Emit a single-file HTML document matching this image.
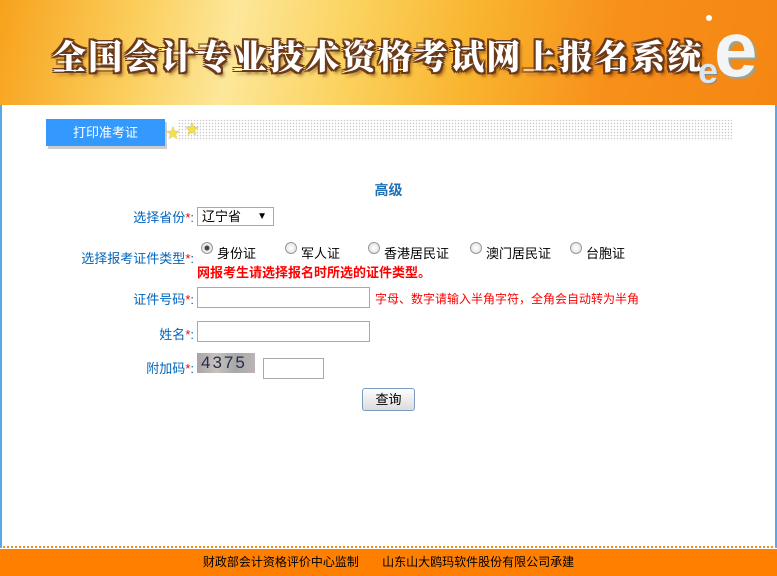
<!DOCTYPE html>
<html><head><meta charset="utf-8">
<style>
*{margin:0;padding:0;box-sizing:border-box}
body{width:777px;height:576px;overflow:hidden;background:#fff;font-family:"Liberation Sans","Noto Sans CJK SC","WenQuanYi Zen Hei",sans-serif;font-size:13px;position:relative}
.banner{position:absolute;left:0;top:0;width:777px;height:105px;background:linear-gradient(100deg,#f7a21c 0%,#fbcf5e 18%,#fde79a 30%,#fbd25e 45%,#f9b530 60%,#f7901a 78%,#f68612 100%);overflow:hidden}
.title{position:absolute;left:52px;top:30px;font-family:"Noto Serif CJK SC","Noto Sans CJK SC",serif;font-weight:900;font-size:34px;color:#fff;letter-spacing:2.2px;
text-shadow:-2px -2px 0 #6b3a1a,2px -2px 0 #6b3a1a,-2px 2px 0 #6b3a1a,2px 2px 0 #6b3a1a,0 2px 0 #6b3a1a,0 -2px 0 #6b3a1a,2px 0 0 #6b3a1a,-2px 0 0 #6b3a1a,3px 4px 3px rgba(90,40,0,.6)}
.bige{position:absolute;left:714px;top:10px;font-size:78px;font-weight:bold;color:#f2f4f6;line-height:1;text-shadow:2px 2px 2px #8aa}
.sme{position:absolute;left:698px;top:50px;font-size:36px;font-weight:bold;color:#dce6ec;text-shadow:1px 1px 1px #789}
.main{position:absolute;left:0;top:105px;width:777px;height:443px;border-left:2px solid #5aa6e8;border-right:2px solid #5aa6e8;border-bottom:2px dotted #f7901a}
.tab{position:absolute;left:46px;top:119px;width:119px;height:27px;background:#3399ff;color:#fff;text-align:center;line-height:27px;font-size:13px;box-shadow:2px 3px 0 #ccc}
.dots{position:absolute;left:178px;top:119px;width:554px;height:22px;background-image:radial-gradient(#c8c8c8 0.6px,transparent 0.9px);background-size:3px 3px}
.star{position:absolute;color:#f3e04a;font-size:14px;text-shadow:0 0 1px #a08000}
.lbl{position:absolute;color:#0066bb;text-align:right;width:200px;font-size:13px}
.lbl b{color:#e00;font-weight:normal}
.inp{position:absolute;border:1px solid #a9a9a9;background:#fff}
.radio{position:absolute;width:12px;height:12px;border-radius:50%;border:1px solid #999;background:radial-gradient(#fff,#ddd)}
.rt{position:absolute;font-size:13px;color:#000}
.footer{position:absolute;left:0;top:549px;width:777px;height:27px;background:#ff7f00;text-align:center;line-height:27px;color:#000;font-size:12px}
</style></head><body>
<div class="banner">
<div class="title">全国会计专业技术资格考试网上报名系统</div>
<div class="sme">e</div>
<div class="bige">e</div>
<div style="position:absolute;left:706px;top:15px;width:6px;height:6px;border-radius:50%;background:#fff"></div>
</div>
<div class="main"></div>
<div class="dots"></div>
<div class="tab">打印准考证</div>
<div class="star" style="left:166px;top:123px">★</div>
<div class="star" style="left:185px;top:119px">★</div>

<div style="position:absolute;left:0;width:777px;text-align:center;top:180px;color:#1f6fb5;font-weight:bold;font-size:14px">高级</div>

<div class="lbl" style="left:-6px;top:207px">选择省份<b>*</b>:</div>
<div class="inp" style="left:197px;top:207px;width:77px;height:19px;font-size:13px;padding-left:4px;line-height:17px">辽宁省<span style="position:absolute;right:6px;top:0;font-size:10px">▼</span></div>

<div class="lbl" style="left:-6px;top:248px">选择报考证件类型<b>*</b>:</div>
<div class="radio" style="left:201px;top:242px;background:radial-gradient(#444 2px,#eee 3px,#ddd)"></div><div class="rt" style="left:217px;top:243px">身份证</div>
<div class="radio" style="left:285px;top:242px"></div><div class="rt" style="left:301px;top:243px">军人证</div>
<div class="radio" style="left:368px;top:242px"></div><div class="rt" style="left:384px;top:243px">香港居民证</div>
<div class="radio" style="left:470px;top:242px"></div><div class="rt" style="left:486px;top:243px">澳门居民证</div>
<div class="radio" style="left:570px;top:242px"></div><div class="rt" style="left:586px;top:243px">台胞证</div>
<div style="position:absolute;left:197px;top:262px;color:#f00;font-weight:bold;font-size:13px">网报考生请选择报名时所选的证件类型。</div>

<div class="lbl" style="left:-6px;top:289px">证件号码<b>*</b>:</div>
<div class="inp" style="left:197px;top:287px;width:173px;height:21px"></div>
<div style="position:absolute;left:375px;top:290px;color:#f00;font-size:12px">字母、数字请输入半角字符，全角会自动转为半角</div>

<div class="lbl" style="left:-6px;top:324px">姓名<b>*</b>:</div>
<div class="inp" style="left:197px;top:321px;width:173px;height:21px"></div>

<div class="lbl" style="left:-6px;top:358px">附加码<b>*</b>:</div>
<div style="position:absolute;left:197px;top:353px;width:58px;height:20px;background:linear-gradient(90deg,#a9a3a6,#c6c2bf,#a5a9a8,#bdb3b8);color:#2a2a4a;font-size:17px;letter-spacing:2px;line-height:20px;padding-left:4px;font-family:'Liberation Sans',sans-serif">4375</div>
<div class="inp" style="left:263px;top:358px;width:61px;height:21px"></div>

<div style="position:absolute;left:362px;top:388px;width:53px;height:23px;border:1px solid #7a9cc0;border-radius:3px;background:linear-gradient(#fdfdfd,#dcdcdc);text-align:center;line-height:21px;font-size:13px">查询</div>

<div class="footer">财政部会计资格评价中心监制&nbsp;&nbsp;&nbsp;&nbsp;&nbsp;&nbsp;&nbsp;山东山大鸥玛软件股份有限公司承建</div>
</body></html>
